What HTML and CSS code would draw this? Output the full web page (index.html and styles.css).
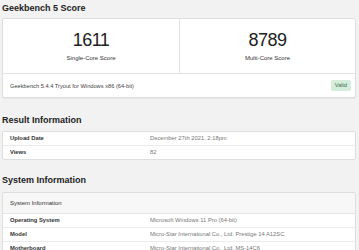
FILE: index.html
```html
<!DOCTYPE html>
<html lang="en">
<head>
  <meta charset="UTF-8" />
  <meta name="viewport" content="width=device-width, initial-scale=1.0" />
  <title>Geekbench 5 Score</title>
  <link rel="stylesheet" href="styles.css">
</head>
<body>
  <h2 class="section-title">Geekbench 5 Score</h2>
  <div class="card">
    <div class="scores">
      <div class="score">
        <div class="score-value">1611</div>
        <div class="score-label">Single-Core Score</div>
      </div>
      <div class="score">
        <div class="score-value">8789</div>
        <div class="score-label">Multi-Core Score</div>
      </div>
    </div>
    <div class="card-footer">
      <span>Geekbench 5.4.4 Tryout for Windows x86 (64-bit)</span>
      <span class="badge">Valid</span>
    </div>
  </div>

  <h2 class="section-title result-title">Result Information</h2>
  <div class="info-table">
    <div class="info-row">
      <div class="info-name">Upload Date</div>
      <div class="info-value">December 27th 2021, 2:18pm</div>
    </div>
    <div class="info-row">
      <div class="info-name">Views</div>
      <div class="info-value">82</div>
    </div>
  </div>

  <h2 class="section-title system-title">System Information</h2>
  <div class="info-table system-table">
    <div class="info-head">System Information</div>
    <div class="info-row">
      <div class="info-name">Operating System</div>
      <div class="info-value">Microsoft Windows 11 Pro (64-bit)</div>
    </div>
    <div class="info-row">
      <div class="info-name">Model</div>
      <div class="info-value">Micro-Star International Co., Ltd. Prestige 14 A12SC</div>
    </div>
    <div class="info-row">
      <div class="info-name">Motherboard</div>
      <div class="info-value">Micro-Star International Co., Ltd. MS-14C6</div>
    </div>
  </div>
</body>
</html>
```

FILE: styles.css
```css
body {
  margin: 0;
  padding: 2px 3px 0 2px;
  background-color: #f2f2f2;
  font-family: "Liberation Sans", Arial, sans-serif;
  color: #333;
}
.section-title {
  margin: 0;
  font-size: 9px;
  line-height: 12px;
  font-weight: bold;
  color: #222;
}
.card {
  margin-top: 4px;
  background: white;
  border: 1px solid #dedede;
  border-radius: 2px;
  box-shadow: 0 1px 1px rgba(0,0,0,0.05);
}
.scores {
  display: grid;
  grid-template-columns: 1fr 1fr;
  height: 54px;
  border-bottom: 1px solid #e3e3e3;
}
.score {
  text-align: center;
  padding-top: 10px;
}
.score + .score {
  border-left: 1px solid #e3e3e3;
}
.score-value {
  font-size: 18px;
  line-height: 22px;
  letter-spacing: -0.5px;
  color: #222;
}
.score-label {
  margin-top: 3px;
  font-size: 6px;
  line-height: 8px;
  color: #333;
}
.card-footer {
  display: flex;
  align-items: center;
  justify-content: space-between;
  height: 23px;
  padding: 0 4px 0 7px;
  font-size: 5.7px;
  color: #444;
}
.badge {
  background-color: #d5eddb;
  color: #3d6b48;
  padding: 2px 4px;
  border-radius: 2px;
  font-size: 5.7px;
  line-height: 7px;
}
.result-title {
  margin-top: 16px;
}
.system-title {
  margin-top: 14px;
}
.info-table {
  margin-top: 5px;
  background: white;
  border: 1px solid #dedede;
  border-radius: 2px;
}
.system-table {
  margin-top: 6px;
}
.info-head {
  height: 20px;
  line-height: 20px;
  padding-left: 7px;
  font-size: 6px;
  background-color: #f7f7f7;
  color: #333;
  border-bottom: 1px solid #e5e5e5;
}
.info-row {
  display: grid;
  grid-template-columns: 147px 1fr;
  height: 13px;
  line-height: 13px;
  font-size: 5.8px;
}
.info-row + .info-row {
  border-top: 1px solid #ebebeb;
}
.info-name {
  padding-left: 7px;
  font-weight: bold;
  color: #333;
}
.info-value {
  color: #777;
  white-space: nowrap;
}
```
